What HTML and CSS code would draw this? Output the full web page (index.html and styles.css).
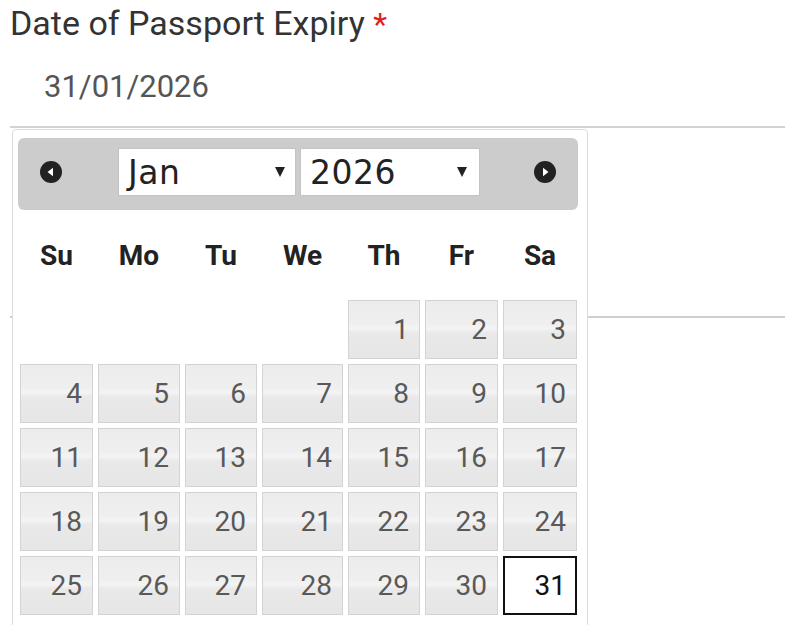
FILE: index.html
```html
<!DOCTYPE html>
<html>
<head>
<meta charset="utf-8">
<link rel="stylesheet" href="styles.css">
</head>
<body>
<div class="page">
  <div class="form">
    <div class="label">Date of Passport Expiry <span class="req">*</span></div>
    <div class="input">31/01/2026</div>
    <div class="next-field"></div>
  </div>

  <div class="datepicker">
    <div class="dp-header">
      <span class="nav prev">
        <svg width="24" height="24" viewBox="0 0 24 24"><circle cx="12" cy="12" r="11" fill="#222"/><polygon points="8.5,12 14,7.8 14,16.2" fill="#fff"/></svg>
      </span>
      <div class="sel sel-month"><span>Jan</span><i class="caret"></i></div>
      <div class="sel sel-year"><span>2026</span><i class="caret"></i></div>
      <span class="nav next">
        <svg width="24" height="24" viewBox="0 0 24 24"><circle cx="12" cy="12" r="11" fill="#222"/><polygon points="15.5,12 10,7.8 10,16.2" fill="#fff"/></svg>
      </span>
    </div>
    <div class="grid dow">
      <span>Su</span><span>Mo</span><span>Tu</span><span>We</span><span>Th</span><span>Fr</span><span>Sa</span>
    </div>
    <div class="grid days">
      <span class="empty"></span><span class="empty"></span><span class="empty"></span><span class="empty"></span>
      <span class="d">1</span><span class="d">2</span><span class="d">3</span>
      <span class="d">4</span><span class="d">5</span><span class="d">6</span><span class="d">7</span><span class="d">8</span><span class="d">9</span><span class="d">10</span>
      <span class="d">11</span><span class="d">12</span><span class="d">13</span><span class="d">14</span><span class="d">15</span><span class="d">16</span><span class="d">17</span>
      <span class="d">18</span><span class="d">19</span><span class="d">20</span><span class="d">21</span><span class="d">22</span><span class="d">23</span><span class="d">24</span>
      <span class="d">25</span><span class="d">26</span><span class="d">27</span><span class="d">28</span><span class="d">29</span><span class="d">30</span><span class="d active">31</span>
    </div>
  </div>
</div>
</body>
</html>
```

FILE: styles.css
```css
html, body {
  margin: 0;
  padding: 0;
  background: #fff;
  width: 800px;
  height: 625px;
  overflow: hidden;
}
.page {
  position: relative;
  width: 800px;
  height: 625px;
  font-family: Roboto, "Liberation Sans", sans-serif;
}
.form {
  padding: 3px 15px 0 10px;
}
.label {
  font-size: 34px;
  line-height: 41px;
  color: #333;
}
.req {
  color: #e02020;
  font-size: 32px;
}
.input {
  font-size: 31px;
  line-height: 36px;
  color: #555;
  padding: 24px 0 21px 34px;
  border-bottom: 2px solid #d2d2d2;
}
.next-field {
  height: 188px;
  border-bottom: 2px solid #cfcfcf;
}
.datepicker {
  position: absolute;
  left: 12px;
  top: 129px;
  width: 576px;
  height: 520px;
  box-sizing: border-box;
  border: 1px solid #dcdcdc;
  border-radius: 4px;
  background: #fff;
  padding: 8px 9px 0 5px;
}
.dp-header {
  height: 72px;
  background: #cccccc;
  border-radius: 6px;
  display: flex;
  align-items: center;
}
.nav {
  display: flex;
  width: 24px;
  height: 24px;
  margin-top: -4px;
}
.prev {
  margin-left: 21px;
  margin-right: 55px;
}
.next {
  margin-left: 53px;
}
.sel {
  height: 48px;
  margin-top: -4px;
  background: #fff;
  border: 1px solid #c4c4c4;
  box-sizing: border-box;
  display: flex;
  align-items: center;
  justify-content: space-between;
  font-family: "DejaVu Sans", Verdana, sans-serif;
  font-size: 33px;
  letter-spacing: 0.5px;
  color: #222;
  padding: 0 10px 0 9px;
}
.sel-month {
  width: 178px;
  margin-right: 4px;
}
.sel-year {
  width: 180px;
  padding-right: 12px;
}
.caret {
  width: 0;
  height: 0;
  border-left: 5px solid transparent;
  border-right: 5px solid transparent;
  border-top: 10px solid #222;
}
.grid {
  display: grid;
  grid-template-columns: 73px 82px 72px 81px 72px 73px 74px;
  column-gap: 5px;
  margin-left: 2px;
}
.dow {
  height: 85px;
  padding-top: 5px;
  box-sizing: border-box;
  align-items: center;
  text-align: center;
  font-weight: bold;
  font-size: 28px;
  color: #222;
}
.days {
  margin-top: 5px;
  grid-auto-rows: 59px;
  row-gap: 5px;
}
.d {
  box-sizing: border-box;
  border: 1px solid #d3d3d3;
  background: linear-gradient(to bottom, #ececec 0%, #efefef 40%, #f4f4f4 48%, #e9e9e9 56%, #e6e6e6 100%);
  display: flex;
  align-items: center;
  justify-content: flex-end;
  padding-right: 10px;
  font-size: 28px;
  color: #595959;
}
.d.active {
  background: #fff;
  border: 2px solid #111;
  color: #111;
  padding-right: 9px;
}
```
